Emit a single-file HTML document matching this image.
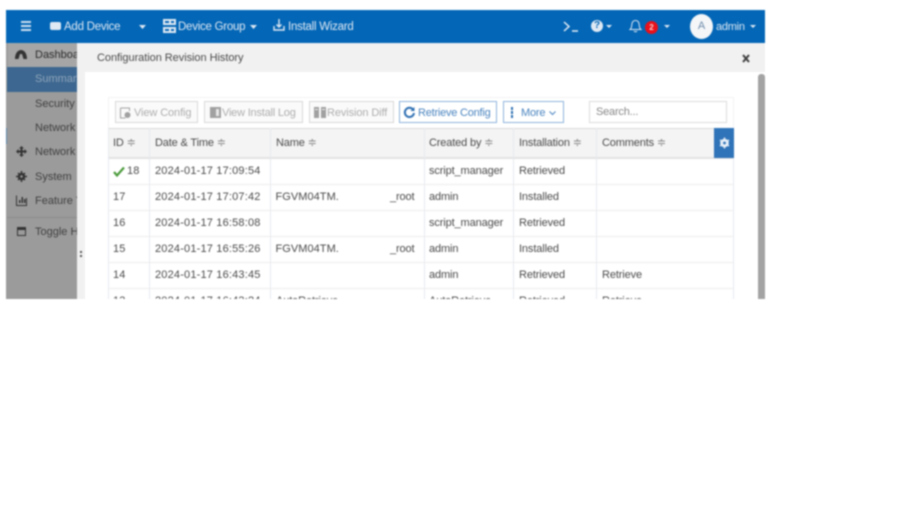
<!DOCTYPE html>
<html><head><meta charset="utf-8"><style>
html,body{margin:0;padding:0;background:#fff;width:907px;height:510px;overflow:hidden}
#w{position:absolute;left:0;top:0;width:907px;height:510px;filter:blur(.75px);font-family:"Liberation Sans",sans-serif;font-size:11px;color:#3a3a3a}
#r{position:absolute;left:6px;top:10px;width:759px;height:289px;overflow:hidden;background:#fff}
.a{position:absolute;white-space:nowrap}
.b{position:absolute}
.n{color:#dfe9f4;font-size:11.5px;top:10px;letter-spacing:-.25px;margin-top:1px}
.s{color:#3f3f3f;font-size:11px;left:29px}
.c{position:absolute;white-space:nowrap;font-size:11px;letter-spacing:-.12px;color:#4a4a4a;margin-top:1px}
.d{letter-spacing:.18px}
.h{position:absolute;white-space:nowrap;font-size:11px;letter-spacing:-.15px;color:#4a4a4a;top:126px}
.h i{font-style:normal;color:#888}
.btn{position:absolute;top:91px;height:22px;border:1px solid #d8d8d8;box-sizing:border-box;color:#adadad;font-size:11px;line-height:22px;white-space:nowrap;background:#fafafa;letter-spacing:-.1px}
.bl{border-color:#8db4dc;color:#4a84bf;background:#fff}
.hl{position:absolute;left:102px;width:626px;height:1px;background:#ececec}
.vl{position:absolute;top:118px;width:1px;height:171px;background:#e6e9ee}
</style></head><body><div id="w"><div id="r">
<!-- top bar -->
<div class="b" style="left:0;top:0;width:759px;height:33px;background:#0366b6"></div>
<div class="b" style="left:15px;top:11px;width:10px;height:2px;background:#cfdff0"></div>
<div class="b" style="left:15px;top:15px;width:10px;height:2px;background:#cfdff0"></div>
<div class="b" style="left:15px;top:19px;width:10px;height:2px;background:#cfdff0"></div>
<div class="b" style="left:44px;top:12px;width:11px;height:8px;background:#dfe9f4;border-radius:2px"></div>
<div class="a n" style="left:58px">Add Device</div>
<svg class="b" style="left:133px;top:15px" width="8" height="5"><path d="M0 0h7L3.500 4z" fill="#dfe9f4"/></svg>
<svg class="b" style="left:157px;top:9px" width="13" height="14"><path d="M0 0h13v6H0zM0 8h13v6H0z" fill="#dfe9f4"/><path d="M2 2h4v2H2zM8 2h3v2H8zM2 10h4v2H2zM8 10h3v2H8z" fill="#0366b6"/></svg>
<div class="a n" style="left:172px">Device Group</div>
<svg class="b" style="left:244px;top:15px" width="8" height="5"><path d="M0 0h7L3.500 4z" fill="#dfe9f4"/></svg>
<svg class="b" style="left:267px;top:8px" width="12" height="14"><path d="M6 1v8M3.500 6.500 6 9l2.500-2.500M1 8v4h10V8" fill="none" stroke="#dfe9f4" stroke-width="1.400"/></svg>
<div class="a n" style="left:282px">Install Wizard</div>
<svg class="b" style="left:557px;top:11px" width="16" height="12"><path d="M1 1l5 4.500-5 4.500M9 10h6" fill="none" stroke="#e6eef7" stroke-width="1.500"/></svg>
<div class="b" style="left:585px;top:10px;width:12px;height:12px;border-radius:50%;background:#dfe9f4;color:#0366b6;font:bold 10px/12px 'Liberation Sans',sans-serif;text-align:center">?</div>
<svg class="b" style="left:600px;top:15px" width="7" height="4"><path d="M0 0h6L3 3z" fill="#dfe9f4"/></svg>
<svg class="b" style="left:623px;top:8px" width="13" height="15"><path d="M1 11.500c2-1.500 1.500-3.500 2-6 .5-2 2-3 3.500-3s3 1 3.500 3c.5 2.500 0 4.500 2 6zM5 13c.5 1 2.500 1 3 0" fill="none" stroke="#dfe9f4" stroke-width="1"/></svg>
<div class="b" style="left:639px;top:11px;width:13px;height:13px;border-radius:50%;background:#e8101a;color:#f8d0d0;font:bold 8px/13px 'Liberation Sans',sans-serif;text-align:center">2</div>
<svg class="b" style="left:658px;top:15px" width="7" height="4"><path d="M0 0h6L3 3z" fill="#dfe9f4"/></svg>
<div class="b" style="left:684px;top:4px;width:23px;height:25px;border-radius:50%;background:#f4f6f8;color:#6e8cab;font-size:11px;line-height:25px;text-align:center">A</div>
<div class="a n" style="left:710px;font-size:11px">admin</div>
<svg class="b" style="left:744px;top:15px" width="7" height="4"><path d="M0 0h6L3 3z" fill="#dfe9f4"/></svg>
<!-- sidebar -->
<div class="b" style="left:0;top:33px;width:71px;height:256px;background:#9b9b9b"></div>
<div class="b" style="left:2px;top:33px;width:69px;height:24px;background:#a6a6a6"></div>
<div class="b" style="left:1px;top:57px;width:70px;height:25px;background:#3d6790"></div>
<div class="b" style="left:0;top:118px;width:1px;height:16px;background:#5b84ad"></div>
<div class="a s" style="top:39px;color:#2a2a2a;overflow:hidden;width:42px">Dashboard</div>
<div class="a s" style="top:63px;color:#8fa5bb;overflow:hidden;width:42px">Summary</div>
<div class="a s" style="top:88px;overflow:hidden;width:42px">Security</div>
<div class="a s" style="top:112px;overflow:hidden;width:42px">Network</div>
<div class="a s" style="top:136px;overflow:hidden;width:42px">Network</div>
<div class="a s" style="top:161px;overflow:hidden;width:42px">System</div>
<div class="a s" style="top:185px;overflow:hidden;width:42px">Feature Visibility</div>
<div class="a s" style="top:216px;overflow:hidden;width:42px">Toggle Help</div>
<svg class="b" style="left:9px;top:39px" width="12" height="11"><path d="M0 10C0 4 3 1 6 1s6 3 6 9H8.500L7 5H5L3.500 10z" fill="#333"/></svg>
<svg class="b" style="left:10px;top:136px" width="11" height="11"><path d="M5.500 0 8 2.500H6.500V4.500H8.500V3L11 5.500 8.500 8V6.500H6.500V8.500H8L5.500 11 3 8.500H4.500V6.500H2.500V8L0 5.500 2.500 3V4.500H4.500V2.500H3z" fill="#333"/></svg>
<svg class="b" style="left:10px;top:161px" width="11" height="11"><circle cx="5.500" cy="5.500" r="2.500" fill="none" stroke="#333" stroke-width="2.500"/><path d="M5.500 0v2.500M5.500 8.500v2.500M0 5.500h2.500M8.500 5.500h2.500M2 2l1.500 1.500M9 2 7.500 3.500M2 9l1.500-1.500M9 9 7.500 7.500" stroke="#333" stroke-width="1.500"/></svg>
<svg class="b" style="left:10px;top:185px" width="11" height="11"><path d="M.5.500v10h10V3" fill="none" stroke="#333"/><path d="M3 8V5h1.500v3zM5.500 8V2H7v6zM8 8V4h1.500v4z" fill="#333"/></svg>
<div class="b" style="left:1px;top:207px;width:70px;height:1px;background:#8a8a8a"></div>
<svg class="b" style="left:11px;top:217px" width="9" height="9"><path d="M0 0h9v9H0z" fill="#333"/><path d="M1 3h7v5H1z" fill="#9b9b9b"/></svg>
<!-- modal -->
<div class="b" style="left:71px;top:33px;width:688px;height:256px;background:#f1f1f1"></div>
<div class="b" style="left:79px;top:62px;width:680px;height:227px;background:#fff"></div>
<div class="a" style="left:91px;top:42px;font-size:11px;letter-spacing:-.05px;color:#4a4a4a">Configuration Revision History</div>
<svg class="b" style="left:736px;top:44px" width="8" height="9"><path d="M1 1l6 7M7 1 1 8" stroke="#3f3f3f" stroke-width="2"/></svg>
<div class="b" style="left:752px;top:64px;width:7px;height:225px;background:#a3a3a3;border-radius:3px 3px 0 0"></div>
<div class="b" style="left:74px;top:241px;width:2px;height:2px;background:#555;box-shadow:0 4px 0 #555"></div>
<!-- toolbar -->
<div class="b" style="left:102px;top:87px;width:626px;height:31px;border:1px solid #f3f3f3;box-sizing:border-box;border-bottom:0"></div>
<div class="btn" style="left:109px;width:83px;padding-left:18px">View Config</div>
<svg class="b" style="left:114px;top:97px" width="11" height="12"><path d="M.5 1h9v3M.5 1v10h5" fill="none" stroke="#a0a0a0"/><circle cx="7.500" cy="8" r="3" fill="#a0a0a0"/></svg>
<div class="btn" style="left:198px;width:99px;padding-left:17px;letter-spacing:-.2px">View Install Log</div>
<svg class="b" style="left:204px;top:97px" width="11" height="11"><path d="M0 0h11v11H0z" fill="#a0a0a0"/><path d="M6 2h3v7H6z" fill="#e8e8e8"/></svg>
<div class="btn" style="left:303px;width:85px;padding-left:17px;letter-spacing:-.1px">Revision Diff</div>
<svg class="b" style="left:308px;top:97px" width="12" height="11"><path d="M0 0h5v11H0zM7 0h5v11H7z" fill="#a0a0a0"/><path d="M1 2h3v1H1zM8 2h3v1H8z" fill="#eee"/></svg>
<div class="btn bl" style="left:393px;width:98px;padding-left:18px;letter-spacing:-.22px">Retrieve Config</div>
<svg class="b" style="left:397px;top:96px" width="13" height="13"><path d="M10 3.500A4.600 4.600 0 1 0 11 7" fill="none" stroke="#2f70b3" stroke-width="2"/><path d="M11.500 1v4h-4z" fill="#2f70b3"/></svg>
<div class="btn bl" style="left:497px;width:61px;padding-left:17px;letter-spacing:-.2px">More</div>
<svg class="b" style="left:543px;top:101px" width="7" height="5"><path d="M.5.500 3.500 3.500 6.500.500" fill="none" stroke="#4a84bf"/></svg>
<div class="b" style="left:505px;top:97px;width:2px;height:2.500px;background:#2f70b3;box-shadow:0 4px 0 #2f70b3,0 8px 0 #2f70b3"></div>
<div class="b" style="left:583px;top:91px;width:138px;height:22px;border:1px solid #dcdcdc;box-sizing:border-box;color:#888;line-height:21px;padding-left:6px;font-size:11px;letter-spacing:-.2px">Search...</div>
<!-- table -->
<div class="b" style="left:102px;top:118px;width:626px;height:31px;background:#f4f4f4;border-top:1px solid #d8d8d8;border-bottom:2px solid #e2e2e2;box-sizing:border-box"></div>
<div class="vl" style="left:102px"></div><div class="vl" style="left:143px"></div><div class="vl" style="left:264px"></div><div class="vl" style="left:418px"></div><div class="vl" style="left:507px"></div><div class="vl" style="left:590px"></div><div class="vl" style="left:727px"></div>
<div class="hl" style="top:174px"></div><div class="hl" style="top:200px"></div><div class="hl" style="top:226px"></div><div class="hl" style="top:252px"></div><div class="hl" style="top:278px"></div>
<div class="b" style="left:708px;top:118px;width:20px;height:30px;background:#2f73b8"></div>
<svg class="b" style="left:713px;top:127px" width="11" height="12"><circle cx="5.500" cy="6" r="3" fill="none" stroke="#e8f0f8" stroke-width="2.600"/><path d="M5.500 .5v11M1 3l9 6M10 3 1 9" stroke="#e8f0f8" stroke-width="1.400"/><circle cx="5.500" cy="6" r="1.400" fill="#2f73b8"/></svg>
<div class="h" style="left:107px">ID <i>≑</i></div>
<div class="h" style="left:149px">Date &amp; Time <i>≑</i></div>
<div class="h" style="left:270px">Name <i>≑</i></div>
<div class="h" style="left:423px">Created by <i>≑</i></div>
<div class="h" style="left:513px">Installation <i>≑</i></div>
<div class="h" style="left:596px">Comments <i>≑</i></div>
<svg class="b" style="left:107px;top:155px" width="13" height="13"><path d="M1 7l3 3.500L11 2.500" fill="none" stroke="#4a9a3a" stroke-width="2.200"/></svg>
<div class="c d" style="left:121px;top:154px">18</div><div class="c d" style="left:149px;top:154px">2024-01-17 17:09:54</div><div class="c" style="left:423px;top:154px">script_manager</div><div class="c" style="left:513px;top:154px">Retrieved</div>
<div class="c d" style="left:107px;top:180px">17</div><div class="c d" style="left:149px;top:180px">2024-01-17 17:07:42</div><div class="c" style="left:269.500px;top:180px;letter-spacing:.05px">FGVM04TM.</div><div class="c" style="left:384px;top:180px">_root</div><div class="c" style="left:423px;top:180px">admin</div><div class="c" style="left:513px;top:180px">Installed</div>
<div class="c d" style="left:107px;top:206px">16</div><div class="c d" style="left:149px;top:206px">2024-01-17 16:58:08</div><div class="c" style="left:423px;top:206px">script_manager</div><div class="c" style="left:513px;top:206px">Retrieved</div>
<div class="c d" style="left:107px;top:232px">15</div><div class="c d" style="left:149px;top:232px">2024-01-17 16:55:26</div><div class="c" style="left:269.500px;top:232px;letter-spacing:.05px">FGVM04TM.</div><div class="c" style="left:384px;top:232px">_root</div><div class="c" style="left:423px;top:232px">admin</div><div class="c" style="left:513px;top:232px">Installed</div>
<div class="c d" style="left:107px;top:258px">14</div><div class="c d" style="left:149px;top:258px">2024-01-17 16:43:45</div><div class="c" style="left:423px;top:258px">admin</div><div class="c" style="left:513px;top:258px">Retrieved</div><div class="c" style="left:596px;top:258px">Retrieve</div>
<div class="c d" style="left:107px;top:284px">13</div><div class="c d" style="left:149px;top:284px">2024-01-17 16:43:24</div><div class="c" style="left:270px;top:284px">AutoRetrieve</div><div class="c" style="left:423px;top:284px">AutoRetrieve</div><div class="c" style="left:513px;top:284px">Retrieved</div><div class="c" style="left:596px;top:284px">Retrieve</div>
</div></div></body></html>
